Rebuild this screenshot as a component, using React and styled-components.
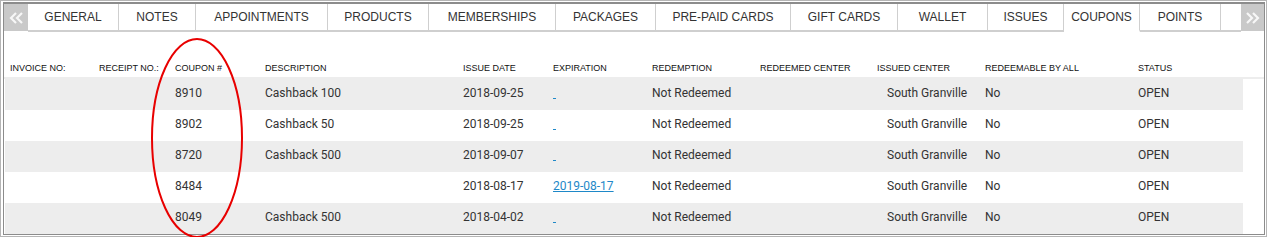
import React from "react";
import styled, { createGlobalStyle } from "styled-components";

const GlobalStyle = createGlobalStyle`
  body {
    margin: 0;
    background: #fff;
    font-family: "Liberation Sans", Arial, sans-serif;
  }
`;

const Frame = styled.div`
  position: relative;
  width: 1267px;
  height: 237px;
  box-sizing: border-box;
  border: 1px solid #b5b5b5;
  padding: 1px 1px 1px 2px;
`;

const Panel = styled.div`
  height: 100%;
  box-sizing: border-box;
  border: 1px solid #8c8c8c;
  border-top-width: 2px;
  display: flex;
  flex-direction: column;
`;

const TabBar = styled.div`
  display: flex;
  height: 28px;
  flex-shrink: 0;
`;

const ArrowBtn = styled.div`
  width: ${(props) => props.width}px;
  height: 27px;
  background-color: #c9c9c9;
  display: flex;
  align-items: center;
  justify-content: center;
  flex-shrink: 0;
`;

const Tab = styled.div`
  width: ${(props) => props.width}px;
  box-sizing: border-box;
  border-right: 1px solid #cfcfcf;
  border-bottom: 2px solid ${(props) => (props.active ? "transparent" : "#cfcfcf")};
  display: flex;
  align-items: center;
  justify-content: center;
  font-size: 12px;
  color: #333;
  text-transform: uppercase;
  white-space: nowrap;
  flex-shrink: 0;
`;

const TabSpacer = styled.div`
  flex: 1;
  border-bottom: 2px solid #cfcfcf;
`;

const Content = styled.div`
  padding-top: 26px;
`;

const columns = "89px 76px 90px 198px 90px 99px 108px 117px 108px 153px 104px";

const HeaderRow = styled.div`
  display: grid;
  grid-template-columns: ${columns};
  height: 19px;
  align-items: center;
  padding-left: 6px;
  border-bottom: 2px solid #ededed;
`;

const HeadCell = styled.div`
  font-family: "Liberation Sans", Arial, sans-serif;
  font-size: 9px;
  color: #111;
  white-space: nowrap;
`;

const Rows = styled.div`
  width: 1238px;
  margin-left: 1px;
`;

const Row = styled.div`
  display: grid;
  grid-template-columns: ${columns};
  height: 31px;
  align-items: center;
  padding-left: 5px;
  padding-bottom: 3px;
  box-sizing: border-box;
  background-color: ${(props) => (props.shaded ? "#ededed" : "#fff")};
`;

const Cell = styled.div`
  font-family: Roboto, "Noto Sans", sans-serif;
  font-size: 12px;
  color: #333;
  white-space: nowrap;
  padding-left: ${(props) => (props.indent ? "10px" : "0")};
`;

const Link = styled.a`
  color: #1e88c8;
  text-decoration: underline;
`;

const Annotation = styled.svg`
  position: absolute;
  left: 0;
  top: 0;
  pointer-events: none;
`;

const Chevrons = ({ dir }) => (
  <svg width="14" height="12" viewBox="0 0 14 12">
    <g
      fill="none"
      stroke="#f7f7f7"
      strokeWidth="2.2"
      transform={dir === "right" ? "translate(14,0) scale(-1,1)" : undefined}
    >
      <polyline points="7,1 2,6 7,11" />
      <polyline points="13,1 8,6 13,11" />
    </g>
  </svg>
);

const tabs = [
  { label: "General", width: 91 },
  { label: "Notes", width: 77 },
  { label: "Appointments", width: 132 },
  { label: "Products", width: 101 },
  { label: "Memberships", width: 127 },
  { label: "Packages", width: 100 },
  { label: "Pre-Paid Cards", width: 135 },
  { label: "Gift Cards", width: 107 },
  { label: "Wallet", width: 90 },
  { label: "Issues", width: 76 },
  { label: "Coupons", width: 76, active: true },
  { label: "Points", width: 81 },
];

const headers = [
  "INVOICE NO:",
  "RECEIPT NO.:",
  "COUPON #",
  "DESCRIPTION",
  "ISSUE DATE",
  "EXPIRATION",
  "REDEMPTION",
  "REDEEMED CENTER",
  "ISSUED CENTER",
  "REDEEMABLE BY ALL",
  "STATUS",
];

const coupons = [
  { id: "8910", desc: "Cashback 100", issued: "2018-09-25", exp: "" },
  { id: "8902", desc: "Cashback 50", issued: "2018-09-25", exp: "" },
  { id: "8720", desc: "Cashback 500", issued: "2018-09-07", exp: "" },
  { id: "8484", desc: "", issued: "2018-08-17", exp: "2019-08-17" },
  { id: "8049", desc: "Cashback 500", issued: "2018-04-02", exp: "" },
];

const App = () => {
  return (
    <>
      <GlobalStyle />
      <Frame>
        <Panel>
          <TabBar>
            <ArrowBtn width={24}>
              <Chevrons dir="left" />
            </ArrowBtn>
            {tabs.map((t) => (
              <Tab key={t.label} width={t.width} active={t.active}>
                {t.label}
              </Tab>
            ))}
            <TabSpacer />
            <ArrowBtn width={23}>
              <Chevrons dir="right" />
            </ArrowBtn>
          </TabBar>
          <Content>
            <HeaderRow>
              {headers.map((h) => (
                <HeadCell key={h}>{h}</HeadCell>
              ))}
            </HeaderRow>
            <Rows>
              {coupons.map((c, i) => (
                <Row key={c.id} shaded={i % 2 === 0}>
                  <Cell />
                  <Cell />
                  <Cell>{c.id}</Cell>
                  <Cell>{c.desc}</Cell>
                  <Cell>{c.issued}</Cell>
                  <Cell>
                    <Link href="#">{c.exp || "\u00a0"}</Link>
                  </Cell>
                  <Cell>Not Redeemed</Cell>
                  <Cell />
                  <Cell indent>South Granville</Cell>
                  <Cell>No</Cell>
                  <Cell>OPEN</Cell>
                </Row>
              ))}
            </Rows>
          </Content>
        </Panel>
        <Annotation width="1268" height="237">
          <ellipse
            cx="196"
            cy="137"
            rx="45"
            ry="99"
            fill="none"
            stroke="#e80000"
            strokeWidth="2"
          />
        </Annotation>
      </Frame>
    </>
  );
};

export default App;
